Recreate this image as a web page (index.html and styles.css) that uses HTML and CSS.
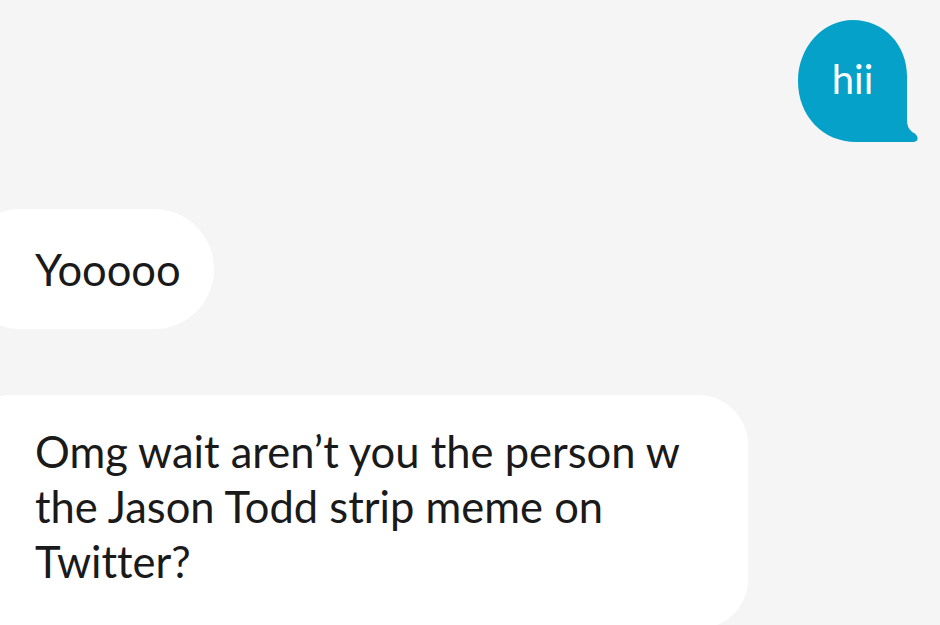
FILE: index.html
```html
<!DOCTYPE html>
<html lang="en">
<head>
  <meta charset="UTF-8">
  <title>Chat</title>
  <meta name="viewport" content="width=device-width, initial-scale=1.0">
  <link rel="stylesheet" href="styles.css">
</head>
<body>

  <div class="chat">
    <div class="riga riga-mia">
      <div class="bolla-mia">
        <svg class="bolla-forma" width="121" height="123" viewBox="0 0 121 123">
          <path d="M55 0 C86 0 109 25 109 56 L109 100 C109 107 112 111 116 113 C121 116 121 122 115 122 L58 122 C25 122 0 96 0 61 C0 27 25 0 55 0 Z" fill="#05a1c9"/>
        </svg>
        <span class="testo-mio">hii</span>
      </div>
    </div>

    <div class="riga">
      <div class="bolla-altro bolla-corta">Yooooo</div>
    </div>

    <div class="riga">
      <div class="bolla-altro bolla-lunga">Omg wait aren’t you the person w the Jason Todd strip meme on Twitter?</div>
    </div>
  </div>

</body>
</html>
```

FILE: styles.css
```css
    body {
      font-family: Lato, "Liberation Sans", sans-serif;
      font-variant-ligatures: none;
      background-color: #f5f5f5;
      margin: 0;
      padding: 0;
      overflow: hidden;
    }

    .chat {
      display: flex;
      flex-direction: column;
      gap: 66px;
      padding-top: 20px;
    }

    .riga {
      display: flex;
    }

    .riga-mia {
      justify-content: flex-end;
      padding-right: 21px;
    }

    .bolla-mia {
      position: relative;
      width: 121px;
      height: 123px;
    }

    .bolla-forma {
      position: absolute;
      top: 0;
      left: 0;
    }

    .testo-mio {
      position: absolute;
      top: 0;
      left: 0;
      width: 109px;
      height: 118px;
      display: flex;
      align-items: center;
      justify-content: center;
      color: white;
      font-size: 40px;
    }

    .bolla-altro {
      background-color: #ffffff;
      color: #1a1a1a;
      font-size: 43.5px;
      margin-left: -40px;
      box-sizing: border-box;
    }

    .bolla-corta {
      height: 120px;
      display: flex;
      align-items: center;
      padding: 0 33px 0 75px;
      border-radius: 60px;
    }

    .bolla-lunga {
      width: 788px;
      line-height: 55px;
      padding: 29px 60px 40px 75px;
      border-radius: 50px;
    }
```
